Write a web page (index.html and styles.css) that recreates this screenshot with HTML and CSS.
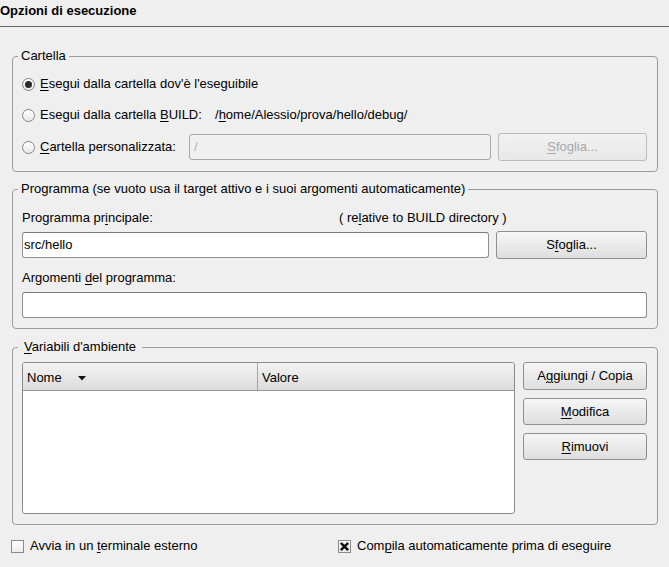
FILE: index.html
```html
<!DOCTYPE html>
<html>
<head>
<meta charset="utf-8">
<link rel="stylesheet" href="styles.css">
</head>
<body>
<div class="dialog">
  <div class="title">Opzioni di esecuzione</div>

  <fieldset class="group g1">
    <legend class="legend">Cartella</legend>
    <div class="row r1">
      <span class="radio checked"></span>
      <span class="lbl"><u>E</u>segui dalla cartella dov'è l'eseguibile</span>
    </div>
    <div class="row r2">
      <span class="radio"></span>
      <span class="lbl w-build">Esegui dalla cartella <u>B</u>UILD:</span>
      <span class="lbl">/<u>h</u>ome/Alessio/prova/hello/debug/</span>
    </div>
    <div class="row r3">
      <span class="radio"></span>
      <span class="lbl w-custom"><u>C</u>artella personalizzata:</span>
      <div class="input disabled grow">/</div>
      <div class="btn disabled w-browse1"><span><u>S</u>foglia...</span></div>
    </div>
  </fieldset>

  <fieldset class="group g2">
    <legend class="legend">Programma (se vuoto usa il target attivo e i suoi argomenti automaticamente)</legend>
    <div class="line l1">
      <span class="lbl w-main">Programma pr<u>i</u>ncipale:</span>
      <span class="lbl">( re<u>l</u>ative to BUILD directory )</span>
    </div>
    <div class="row r4">
      <div class="input grow">src/hello</div>
      <div class="btn w-browse2"><span>S<u>f</u>oglia...</span></div>
    </div>
    <div class="line l2">
      <span class="lbl">Argomenti <u>d</u>el programma:</span>
    </div>
    <div class="input full"></div>
  </fieldset>

  <fieldset class="group g3">
    <legend class="legend wide"><u>V</u>ariabili d'ambiente</legend>
    <div class="envbody">
      <div class="table">
        <div class="thead">
          <div class="th th-name">Nome
            <svg class="sort" width="8" height="5" viewBox="0 0 8 5"><path d="M0 0 H8 L4 4.5 Z" fill="#111"/></svg>
          </div>
          <div class="th th-val">Valore</div>
        </div>
      </div>
      <div class="btncol">
        <div class="btn"><span>A<u>g</u>giungi / Copia</span></div>
        <div class="btn"><span><u>M</u>odifica</span></div>
        <div class="btn"><span><u>R</u>imuovi</span></div>
      </div>
    </div>
  </fieldset>

  <div class="checks">
    <div class="check">
      <span class="box"></span>
      <span class="lbl">Avvia in un <u>t</u>erminale esterno</span>
    </div>
    <div class="check">
      <span class="box checked">
        <svg width="11" height="11" viewBox="0 0 11 11"><path d="M1.8 1.8 L9.2 9.2 M9.2 1.8 L1.8 9.2" stroke="#111" stroke-width="2.6" stroke-linecap="butt"/></svg>
      </span>
      <span class="lbl">Com<u>p</u>ila automaticamente prima di eseguire</span>
    </div>
  </div>
</div>
</body>
</html>
```

FILE: styles.css
```css
* { box-sizing: border-box; }

html, body {
  margin: 0;
  padding: 0;
  background: #efefef;
}

body {
  font-family: "Liberation Sans", Arial, sans-serif;
  font-size: 13px;
  line-height: 16px;
  color: #000;
  width: 669px;
  height: 567px;
  overflow: hidden;
}

u { text-decoration: underline; text-underline-offset: 2px; text-decoration-thickness: 1px; }

.title {
  font-weight: bold;
  padding: 3px 0 7px 0;
  line-height: 16px;
  border-bottom: 1px solid #646464;
}

.group {
  margin: 21px 11px 0 12px;
  border: 1px solid #9c9c9c;
  border-radius: 4px;
  padding: 10px 10px 10px 9px;
  min-inline-size: 0;
}

.g2 { margin-top: 9px; padding-top: 13px; padding-bottom: 10px; }
.g3 { margin-top: 10px; padding-top: 7px; padding-bottom: 10px; }

.legend {
  padding: 0 3px;
  margin-left: -4px;
  line-height: 16px;
  font-size: 13px;
}
.legend.wide { padding: 0 6px; }

.row {
  display: flex;
  align-items: center;
}
.r1 { height: 20px; margin-bottom: 11px; }
.r2 { height: 20px; margin-bottom: 8px; }
.r3 { height: 28px; }
.r4 { height: 28px; margin-top: 5px; gap: 7px; }

.line { height: 16px; display: flex; align-items: center; }
.l2 { margin-top: 11px; }

.lbl { white-space: nowrap; }
.w-build { width: 175px; flex: none; }
.w-custom { width: 149px; flex: none; }
.w-main { width: 317px; flex: none; }

.radio {
  width: 13px;
  height: 13px;
  border-radius: 50%;
  border: 1px solid #858585;
  background: linear-gradient(#ffffff, #e9e9e9);
  margin-right: 5px;
  flex: none;
  display: flex;
  align-items: center;
  justify-content: center;
}
.radio.checked::after {
  content: "";
  width: 7px;
  height: 7px;
  border-radius: 50%;
  background: #2b2b2b;
}

.input {
  height: 26px;
  background: #fff;
  border: 1px solid #8e8e8e;
  border-top-color: #7a7a7a;
  border-radius: 3px;
  padding: 0 1px;
  display: flex;
  align-items: center;
  white-space: nowrap;
}
.input.grow { flex: 1; }
.input.full { margin-top: 6px; }
.input.disabled {
  background: #f0f0f0;
  border-color: #a9a9a9;
  color: #b0b0b0;
  padding-left: 4px;
}
.r3 .input { margin-right: 7px; }

.btn {
  height: 28px;
  border: 1px solid #8f8f8f;
  border-radius: 3px;
  background: linear-gradient(#f6f6f6, #dedede);
  display: flex;
  align-items: center;
  justify-content: center;
  white-space: nowrap;
  flex: none;
}
.btn.disabled {
  border-color: #bcbcbc;
  background: linear-gradient(#f1f1f1, #e8e8e8);
  color: #a8a8a8;
}
.w-browse1 { width: 149px; }
.w-browse2 { width: 151px; }

.envbody {
  display: flex;
  gap: 8px;
}

.table {
  width: 493px;
  height: 152px;
  background: #fff;
  border: 1px solid #8a8a8a;
  border-radius: 3px;
  overflow: hidden;
  flex: none;
}
.thead {
  height: 28px;
  display: flex;
  background: linear-gradient(#f3f3f3, #dcdcdc);
  border-bottom: 1px solid #9a9a9a;
}
.th {
  display: flex;
  align-items: center;
  height: 100%;
  padding-top: 2px;
}
.th-name {
  width: 235px;
  padding-left: 4px;
  border-right: 1px solid #a5a5a5;
}
.th-val { padding-left: 4px; flex: 1; }
.sort { margin-left: 16px; margin-top: 1px; }

.btncol {
  flex: 1;
  display: flex;
  flex-direction: column;
  gap: 8px;
  padding-top: 0;
}
.btncol .btn { height: 28px; }
.btncol .btn + .btn { height: 27px; }

.checks {
  display: flex;
  margin-top: 13px;
  padding-left: 11px;
  height: 16px;
  align-items: center;
}
.check { display: flex; align-items: center; }
.check:first-child { width: 327px; }

.box {
  width: 13px;
  height: 13px;
  border: 1px solid #8a8a8a;
  background: linear-gradient(#ffffff, #ececec);
  margin-right: 6px;
  display: flex;
  align-items: center;
  justify-content: center;
  flex: none;
}
.box.checked { margin-right: 6px; }
.box svg { display: block; }
```
